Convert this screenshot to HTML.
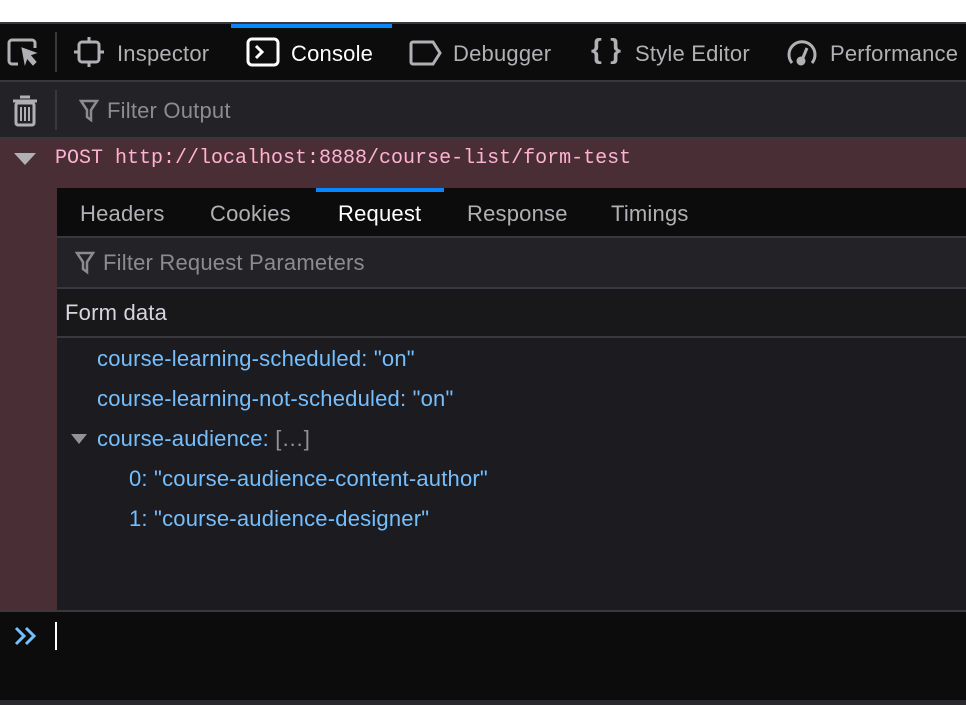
<!DOCTYPE html>
<html><head><style>
*{margin:0;padding:0;box-sizing:border-box}
body{width:966px;height:705px;overflow:hidden;background:#fff;font-family:"Liberation Sans",sans-serif;position:relative}
.a{position:absolute}
.t{color:#b1b1b3;font-size:22px;line-height:22px;letter-spacing:0.2px}
svg{position:absolute}
</style></head><body>
<div class="a" style="top:22px;left:0;width:966px;height:2px;background:#38383d"></div>
<div class="a" style="top:24px;left:0;width:966px;height:56px;background:#0c0c0d"></div>
<div class="a" style="top:24px;left:231px;width:161px;height:4px;background:#0a84ff"></div>
<div class="a" style="top:80px;left:0;width:966px;height:2px;background:#38383d"></div>
<div class="a" style="top:82px;left:0;width:966px;height:55px;background:#232327"></div>
<div class="a" style="top:137px;left:0;width:966px;height:2px;background:#38383d"></div>
<div class="a" style="top:139px;left:0;width:966px;height:471px;background:#4a2e36"></div>
<div class="a" style="top:188px;left:57px;width:909px;height:48px;background:#0c0c0d"></div>
<div class="a" style="top:188px;left:316px;width:128px;height:4px;background:#0a84ff"></div>
<div class="a" style="top:236px;left:57px;width:909px;height:2px;background:#38383d"></div>
<div class="a" style="top:238px;left:57px;width:909px;height:49px;background:#232327"></div>
<div class="a" style="top:287px;left:57px;width:909px;height:2px;background:#38383d"></div>
<div class="a" style="top:289px;left:57px;width:909px;height:47px;background:#18181a"></div>
<div class="a" style="top:336px;left:57px;width:909px;height:2px;background:#38383d"></div>
<div class="a" style="top:338px;left:57px;width:909px;height:272px;background:#1c1b20"></div>
<div class="a" style="top:610px;left:0;width:966px;height:2px;background:#38383d"></div>
<div class="a" style="top:612px;left:0;width:966px;height:88px;background:#0c0c0d"></div>
<div class="a" style="top:700px;left:0;width:966px;height:5px;background:#2a2a2e"></div>

<svg style="left:6px;top:36px" width="36" height="34" viewBox="0 0 36 34" fill="none" stroke="#b1b1b3" stroke-width="3"><path d="M12 28H6a3 3 0 0 1-3-3V7a3 3 0 0 1 3-3h20a3 3 0 0 1 3 3v5"/><path d="M16 12l14 5-6 2 6 7-3 3-6-7-2 6z" fill="#b1b1b3" stroke-width="1"/></svg>
<div class="a" style="left:55px;top:32px;width:2px;height:40px;background:#38383d"></div>
<svg style="left:73px;top:36px" width="32" height="32" viewBox="0 0 32 32" fill="none" stroke="#b1b1b3" stroke-width="3"><rect x="6" y="6" width="20" height="20" rx="3"/><path d="M16 1v5M16 26v5M1 16h5M26 16h5"/></svg>
<div class="a t" style="left:117px;top:43px">Inspector</div>
<svg style="left:246px;top:37px" width="34" height="30" viewBox="0 0 34 30" fill="none" stroke="#fff" stroke-width="3"><rect x="2" y="2" width="30" height="26" rx="4"/><path d="M10 9l6 6-6 6"/></svg>
<div class="a t" style="left:291px;top:43px;color:#fff">Console</div>
<svg style="left:409px;top:39px" width="34" height="28" viewBox="0 0 34 28" fill="none" stroke="#b1b1b3" stroke-width="3"><path d="M4 3h20l7 11-7 11H4a2 2 0 0 1-2-2V5a2 2 0 0 1 2-2z"/></svg>
<div class="a t" style="left:453px;top:43px">Debugger</div>
<div class="a t" style="left:591px;top:38px;font-size:28px;font-weight:bold">{ }</div>
<div class="a t" style="left:635px;top:43px">Style Editor</div>
<svg style="left:786px;top:36px" width="32" height="32" viewBox="0 0 32 32" fill="none" stroke="#b1b1b3" stroke-width="3"><path d="M6 27A13 13 0 1 1 26 27"/><path d="M16 24l5-12"/><circle cx="15" cy="25" r="3" fill="#b1b1b3"/></svg>
<div class="a t" style="left:830px;top:43px">Performance</div>

<svg style="left:11px;top:94px" width="28" height="34" viewBox="0 0 28 34" fill="none" stroke="#b1b1b3" stroke-width="3"><path d="M2 7h24M9 3h10"/><rect x="5" y="9" width="18" height="22" rx="2"/><path d="M10 13v14M14 13v14M18 13v14" stroke-width="2"/></svg>
<div class="a" style="left:55px;top:90px;width:2px;height:40px;background:#38383d"></div>
<svg style="left:79px;top:99px" width="20" height="24" viewBox="0 0 20 24" fill="none" stroke="#8c8c8f" stroke-width="2.5"><path d="M2 2h16l-6 9v10l-4-3v-7z"/></svg>
<div class="a t" style="left:107px;top:100px;color:#8c8c8f">Filter Output</div>

<svg style="left:14px;top:153px" width="22" height="12"><path d="M0 0h22L11 12z" fill="#b1b1b3"/></svg>
<div class="a" style="left:55px;top:149px;font-family:'Liberation Mono',monospace;font-size:20px;line-height:20px;color:#ffb3d2">POST http://localhost:8888/course-list/form-test</div>

<div class="a t" style="left:80px;top:203px">Headers</div>
<div class="a t" style="left:210px;top:203px">Cookies</div>
<div class="a t" style="left:338px;top:203px;color:#fff">Request</div>
<div class="a t" style="left:467px;top:203px">Response</div>
<div class="a t" style="left:611px;top:203px">Timings</div>

<svg style="left:75px;top:251px" width="20" height="24" viewBox="0 0 20 24" fill="none" stroke="#8c8c8f" stroke-width="2.5"><path d="M2 2h16l-6 9v10l-4-3v-7z"/></svg>
<div class="a t" style="left:103px;top:252px;color:#8c8c8f">Filter Request Parameters</div>
<div class="a t" style="left:65px;top:302px;color:#d7d7db">Form data</div>

<div class="a t" style="left:97px;top:348px;color:#75bfff">course-learning-scheduled: "on"</div>
<div class="a t" style="left:97px;top:388px;color:#75bfff">course-learning-not-scheduled: "on"</div>
<svg style="left:71px;top:434px" width="16" height="10"><path d="M0 0h16L8 10z" fill="#939395"/></svg>
<div class="a t" style="left:97px;top:428px;color:#75bfff">course-audience: <span style="color:#939395">[…]</span></div>
<div class="a t" style="left:129px;top:468px;color:#75bfff">0: "course-audience-content-author"</div>
<div class="a t" style="left:129px;top:508px;color:#75bfff">1: "course-audience-designer"</div>

<svg style="left:13px;top:625px" width="26" height="22" viewBox="0 0 26 22" fill="none" stroke="#75bfff" stroke-width="3"><path d="M3 3l8 8-8 8M13 3l8 8-8 8"/></svg>
<div class="a" style="left:55px;top:622px;width:2px;height:28px;background:#fff"></div>
</body></html>
